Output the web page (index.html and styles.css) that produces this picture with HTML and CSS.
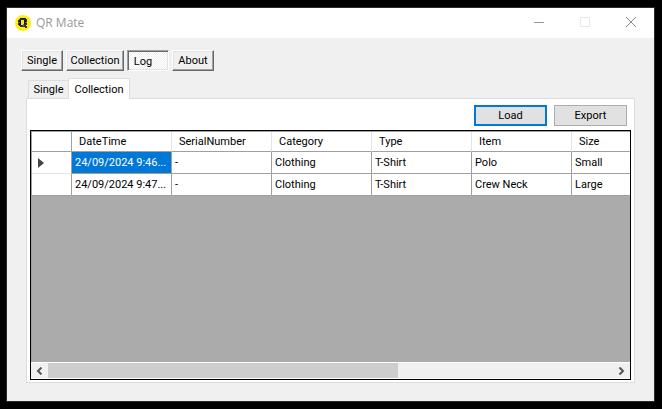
FILE: index.html
```html
<!DOCTYPE html>
<html lang="en">
<head>
<meta charset="utf-8">
<title>QR Mate</title>
<link rel="stylesheet" href="styles.css">
</head>
<body>
<main class="window">
  <header class="titlebar">
    <svg class="logo" width="16" height="16" viewBox="0 0 16 16" aria-hidden="true">
      <circle cx="8" cy="8" r="8" fill="#ffee0c"/>
      <path d="M5 3h6v1h1v6h-1v1h1v2h-2v-1H5v-1H4v-1H3V5h1V4h1z" fill="#3a360a"/>
      <path d="M5 3h5v1H5zM4 5h2v5H4zM9 5h2v4H9z" fill="#14120a"/>
      <path d="M6 5h3v4H8v1H6z" fill="#f4e326"/>
      <path d="M8 9h1v2H8z" fill="#23a06b"/>
      <path d="M3 7h2v1H3zM10 7h2v1h-2z" fill="#776f12"/>
    </svg>
    <h1 class="title">QR Mate</h1>
    <div class="caption">
      <button type="button" aria-label="Minimize"><svg width="12" height="12" viewBox="0 0 12 12"><path d="M1 5.500h10" stroke="#999"/></svg></button>
      <button type="button" aria-label="Maximize" disabled><svg width="12" height="12" viewBox="0 0 12 12"><path d="M1.500 .5h9v9h-9z" fill="none" stroke="#e6e6e6"/></svg></button>
      <button type="button" aria-label="Close"><svg width="12" height="12" viewBox="0 0 12 12"><path d="M1 0l10 10M11 0L1 10" stroke="#888" fill="none"/></svg></button>
    </div>
  </header>
  <div class="content">
    <nav class="toolbar">
      <button type="button">Single</button>
      <button type="button" class="wide">Collection</button>
      <button type="button" class="pressed" aria-pressed="true">Log</button>
      <button type="button">About</button>
    </nav>
    <div class="tabs" role="tablist">
      <button type="button" role="tab" class="tab" aria-selected="false">Single</button>
      <button type="button" role="tab" class="tab active" aria-selected="true">Collection</button>
    </div>
    <section class="panel" role="tabpanel">
      <div class="actions">
        <button type="button" class="primary">Load</button>
        <button type="button">Export</button>
      </div>
      <div class="grid">
        <div class="viewport">
          <table>
            <colgroup><col class="marker"><col><col><col><col><col><col></colgroup>
            <thead>
              <tr><th aria-label="Row"></th><th>DateTime</th><th>SerialNumber</th><th>Category</th><th>Type</th><th>Item</th><th>Size</th></tr>
            </thead>
            <tbody>
              <tr><th aria-label="Current row"><svg width="6" height="10" viewBox="0 0 6 10"><path d="M0 0l6 5-6 5z" fill="#444"/></svg></th><td class="selected">24/09/2024 9:46...</td><td>-</td><td>Clothing</td><td>T-Shirt</td><td>Polo</td><td>Small</td></tr>
              <tr><th aria-label="Row"></th><td>24/09/2024 9:47...</td><td>-</td><td>Clothing</td><td>T-Shirt</td><td>Crew Neck</td><td>Large</td></tr>
            </tbody>
          </table>
        </div>
        <div class="scrollbar">
          <button type="button" aria-label="Scroll left"><svg width="7" height="8" viewBox="0 0 7 8"><path d="M5.500 .5L2 4l3.500 3.500" stroke="#555" stroke-width="2" fill="none"/></svg></button>
          <div class="track"><div class="thumb"></div></div>
          <button type="button" aria-label="Scroll right"><svg width="7" height="8" viewBox="0 0 7 8"><path d="M1.500 .5L5 4 1.500 7.500" stroke="#555" stroke-width="2" fill="none"/></svg></button>
        </div>
      </div>
    </section>
  </div>
</main>
</body>
</html>
```
FILE: styles.css
```css
* { box-sizing: border-box; }

body {
  margin: 0;
  height: 100vh;
  padding: 7px 7px 7px 6px;
  display: flex;
  background: #000;
  color: #000;
  font: 11px/15px Roboto, "Liberation Sans", sans-serif;
}

button {
  margin: 0;
  padding: 0;
  border: 0;
  background: none;
  color: inherit;
  font: inherit;
}

svg { display: block; }

.window {
  flex: 1;
  min-width: 0;
  display: flex;
  flex-direction: column;
  border: 1px solid #2b2b2b;
  background: #f0f0f0;
}

.titlebar {
  height: 30px;
  padding-left: 8px;
  display: flex;
  align-items: center;
  background: #fff;
}

.title {
  flex: 1;
  margin: 0 0 0 5px;
  color: #999;
  font: 12px/16px "Open Sans", "Noto Sans", sans-serif;
}

.caption { display: flex; }

.caption button {
  width: 46px;
  height: 30px;
  display: grid;
  place-items: center;
}

.content {
  flex: 1;
  min-height: 0;
  padding: 12px 19px 18px 14px;
  display: flex;
  flex-direction: column;
}

.toolbar {
  display: flex;
  gap: 3px;
}

.toolbar button {
  width: 42px;
  height: 21px;
  border: 1px solid #fff;
  border-right-color: #696969;
  border-bottom-color: #696969;
  box-shadow: inset -1px -1px #a0a0a0, inset 1px 1px #e3e3e3;
}

.toolbar .wide { width: 58px; }

.toolbar .pressed {
  padding: 1px 10px 0 0;
  border-color: #a0a0a0 #fff #fff #a0a0a0;
  box-shadow: inset 1px 1px #696969, inset -1px -1px #e3e3e3;
  background: repeating-conic-gradient(#fff 0 25%, #f0f0f0 0 50%) 0 0 / 2px 2px;
}

.tabs {
  margin: 7px 0 -1px 7px;
  display: flex;
  align-items: flex-end;
  position: relative;
}

.tab {
  width: 40px;
  height: 19px;
  border: 1px solid #dcdcdc;
  border-right: 0;
}

.tab.active {
  width: 62px;
  height: 21px;
  border: 1px solid #dcdcdc;
  border-bottom: 0;
  background: #fff;
}

.panel {
  flex: 1;
  min-height: 0;
  margin-left: 5px;
  padding: 6px 3px 2px;
  display: flex;
  flex-direction: column;
  gap: 4px;
  border: 1px solid #dcdcdc;
  background: #fff;
}

.actions {
  padding-right: 4px;
  display: flex;
  justify-content: flex-end;
  gap: 7px;
}

.actions button {
  width: 73px;
  height: 21px;
  border: 1px solid #adadad;
  background: #e1e1e1;
}

.actions .primary { border: 2px solid #0078d7; }

.grid {
  flex: 1;
  min-height: 0;
  display: flex;
  flex-direction: column;
  border: 1px solid #000;
}

.viewport {
  flex: 1;
  min-height: 0;
  overflow: hidden;
  border-top: 1px solid #a0a0a0;
  border-left: 1px solid #a0a0a0;
  background: #ababab;
}

table {
  width: 640px;
  table-layout: fixed;
  border-collapse: separate;
  border-spacing: 0;
}

col { width: 100px; }
col.marker { width: 40px; }

th, td {
  padding: 0 3px;
  background: #fff;
  font-weight: 400;
  text-align: left;
  white-space: nowrap;
  overflow: hidden;
}

thead th {
  height: 20px;
  padding: 0 7px;
  border-right: 1px solid #e3e3e3;
  border-bottom: 1px solid #a0a0a0;
}

thead th:first-child { border-right-color: #a0a0a0; }

td {
  height: 22px;
  border-right: 1px solid #a0a0a0;
  border-bottom: 1px solid #a0a0a0;
}

tbody th {
  padding-left: 6px;
  border-right: 1px solid #a0a0a0;
  border-bottom: 1px solid #e3e3e3;
}

tbody tr:last-child th { border-bottom-color: #a0a0a0; }

.selected {
  background: #0078d7;
  color: #fff;
}

.scrollbar {
  height: 17px;
  display: flex;
  border-top: 1px solid #fff;
  border-bottom: 1px solid #fff;
  background: #f0f0f0;
}

.scrollbar button {
  width: 17px;
  display: grid;
  place-items: center;
}

.track { flex: 1; }

.thumb {
  width: 62%;
  height: 100%;
  background: #cdcdcd;
}
```
